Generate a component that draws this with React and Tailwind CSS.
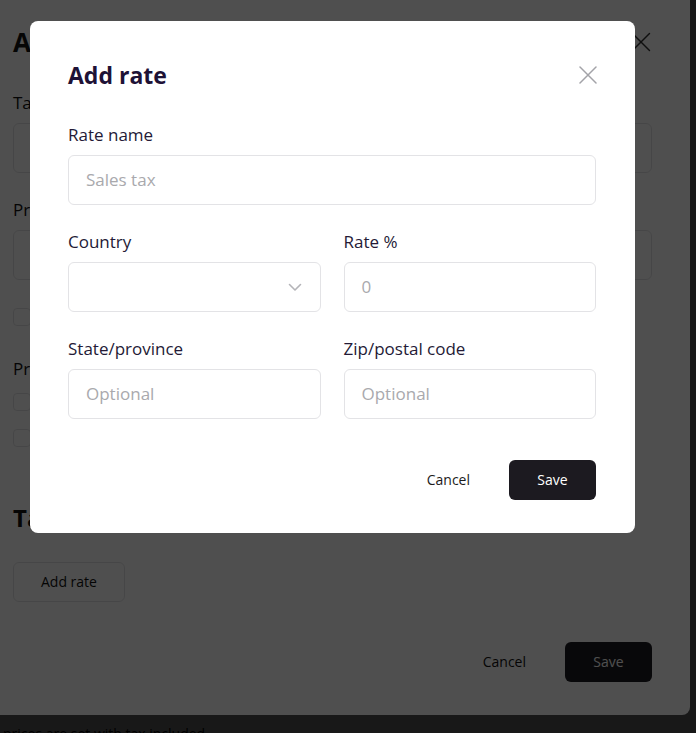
import { X } from 'lucide-react';

const font = { fontFamily: '"Open Sans", "Noto Sans", sans-serif' };

function Field({ label, placeholder, select }) {
  return (
    <div className="flex flex-col gap-2">
      <label className="text-[17px] leading-6 text-[#241a36]">{label}</label>
      <div className="flex h-[50px] items-center justify-between rounded-md border border-[#e3e3e6] px-[17px]">
        <span className="text-[17px] text-[#a9a9ad]">{placeholder}</span>
        {select ? (
          <svg width="14" height="9" viewBox="0 0 14 9" fill="none" className="mr-[1px]">
            <path d="M1.5 1.5 7 7l5.5-5.5" stroke="#b4b4b8" strokeWidth="1.6" strokeLinecap="round" strokeLinejoin="round" />
          </svg>
        ) : null}
      </div>
    </div>
  );
}

function Backdrop() {
  return <div className="absolute inset-0 bg-[rgba(0,0,0,0.69)]" />;
}

function TaxRegionModal() {
  return (
    <div className="absolute left-[-25px] top-[-12px] flex h-[727px] w-[715px] flex-col rounded-lg bg-white px-[38px] pt-[38px] pb-[33px]">
      <div className="flex h-8 items-center justify-between">
        <h2 className="text-[26px] font-bold text-[#111]">Add tax region</h2>
        <X size={34} strokeWidth={1} className="mr-[-6px] text-[#333]" />
      </div>
      <div className="mt-[33px] flex flex-col gap-2">
        <span className="text-[17px] leading-6 text-[#111]">Tax region name</span>
        <div className="h-[50px] rounded-md border border-[#e3e3e6]" />
      </div>
      <div className="mt-[25px] flex flex-col gap-2">
        <span className="text-[17px] leading-6 text-[#111]">Province code</span>
        <div className="h-[50px] rounded-md border border-[#e3e3e6]" />
      </div>
      <div className="mt-[27px] flex items-center gap-3">
        <div className="h-[18px] w-[18px] rounded border border-[#e3e3e6]" />
        <span className="text-sm text-[#111]">Override default rate</span>
      </div>
      <span className="mt-[30px] text-[17px] leading-6 text-[#111]">Prices</span>
      <div className="mt-[11px] flex items-center gap-3">
        <div className="h-[18px] w-[18px] rounded border border-[#e3e3e6]" />
        <span className="text-sm text-[#111]">Include tax in prices</span>
      </div>
      <div className="mt-4 flex items-center gap-3">
        <div className="h-[18px] w-[18px] rounded border border-[#e3e3e6]" />
        <span className="text-sm text-[#111]">Include tax in shipping</span>
      </div>
      <h3 className="mt-[54px] text-[24px] font-bold leading-8 text-[#111]">Tax rates</h3>
      <button className="mt-[28px] h-10 w-[112px] rounded-md border border-[#e3e3e6] text-sm text-[#111]">Add rate</button>
      <div className="mt-auto flex items-center justify-end gap-[39px]">
        <button className="text-sm text-[#111]">Cancel</button>
        <button className="h-10 w-[87px] rounded-md bg-[#1c1a20] text-sm text-white">Save</button>
      </div>
    </div>
  );
}

function AddRateModal() {
  return (
    <div className="absolute left-[30px] top-[21px] w-[605px] rounded-lg bg-white pl-[38px] pr-[39px] pt-[38px] pb-[33px]">
      <div className="flex h-8 items-center justify-between">
        <h2 className="text-[23px] font-bold text-[#1e1236]">Add rate</h2>
        <svg width="18" height="18" viewBox="0 0 18 18" fill="none" className="mr-[-1px]">
          <path d="M1 1l16 16M17 1 1 17" stroke="#a3a3a8" strokeWidth="1.5" strokeLinecap="round" />
        </svg>
      </div>
      <div className="mt-8 flex flex-col gap-[25px]">
        <Field label="Rate name" placeholder="Sales tax" />
        <div className="grid grid-cols-2 gap-x-[23px] gap-y-[25px]">
          <Field label="Country" placeholder="" select />
          <Field label="Rate %" placeholder="0" />
          <Field label="State/province" placeholder="Optional" />
          <Field label="Zip/postal code" placeholder="Optional" />
        </div>
      </div>
      <div className="mt-[41px] flex items-center justify-end gap-[39px]">
        <button className="text-sm text-[#1b1b1b]">Cancel</button>
        <button className="h-10 w-[87px] rounded-md bg-[#1c1a20] text-sm text-white">Save</button>
      </div>
    </div>
  );
}

export default function App() {
  return (
    <div className="relative h-[733px] w-full overflow-hidden bg-white" style={font}>
      <div className="pt-[724px]">
        <p className="-ml-[52px] text-sm leading-5 text-black">Product prices are set with tax included</p>
      </div>
      <Backdrop />
      <TaxRegionModal />
      <Backdrop />
      <AddRateModal />
    </div>
  );
}
